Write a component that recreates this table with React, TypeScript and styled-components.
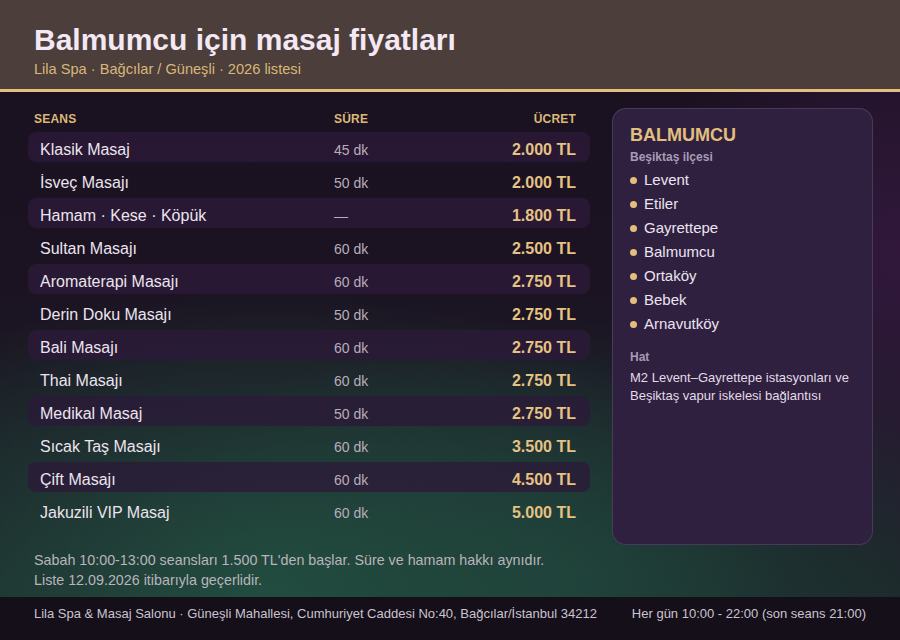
import * as React from 'react';
import styled, { createGlobalStyle } from 'styled-components';

const GlobalStyle = createGlobalStyle`
  html, body {
    margin: 0;
    padding: 0;
    height: 100%;
  }
  body {
    font-family: "Liberation Sans", Arial, sans-serif;
    background: #1a1020;
  }
  #root {
    height: 100%;
  }
`

interface Session {
  name: string
  duration: string
  price: string
}

const sessions: Session[] = [
  { name: 'Klasik Masaj', duration: '45 dk', price: '2.000 TL' },
  { name: 'İsveç Masajı', duration: '50 dk', price: '2.000 TL' },
  { name: 'Hamam · Kese · Köpük', duration: '—', price: '1.800 TL' },
  { name: 'Sultan Masajı', duration: '60 dk', price: '2.500 TL' },
  { name: 'Aromaterapi Masajı', duration: '60 dk', price: '2.750 TL' },
  { name: 'Derin Doku Masajı', duration: '50 dk', price: '2.750 TL' },
  { name: 'Bali Masajı', duration: '60 dk', price: '2.750 TL' },
  { name: 'Thai Masajı', duration: '60 dk', price: '2.750 TL' },
  { name: 'Medikal Masaj', duration: '50 dk', price: '2.750 TL' },
  { name: 'Sıcak Taş Masajı', duration: '60 dk', price: '3.500 TL' },
  { name: 'Çift Masajı', duration: '60 dk', price: '4.500 TL' },
  { name: 'Jakuzili VIP Masaj', duration: '60 dk', price: '5.000 TL' },
]

const neighbourhoods = ['Levent', 'Etiler', 'Gayrettepe', 'Balmumcu', 'Ortaköy', 'Bebek', 'Arnavutköy']

const Page = styled.div`
  height: 640px;
  display: flex;
  flex-direction: column;
  background:
    radial-gradient(ellipse 520px 300px at 30% 92%, rgba(34, 78, 64, 0.95), rgba(34, 78, 64, 0) 100%),
    radial-gradient(ellipse 420px 260px at 62% 90%, rgba(30, 70, 60, 0.7), rgba(30, 70, 60, 0) 100%),
    radial-gradient(ellipse 260px 320px at 100% 40%, rgba(58, 26, 70, 0.7), rgba(58, 26, 70, 0) 100%),
    linear-gradient(180deg, #1a1020 0%, #1b1322 45%, #1d2a2b 100%);
`

const Header = styled.header`
  background: #4b3e3b;
  border-bottom: 3px solid #e2bf7e;
  padding: 22px 34px 10px;
`

const Title = styled.h1`
  margin: 0;
  font-size: 30px;
  line-height: 36px;
  font-weight: 700;
  color: #f3e8f3;
`

const Subtitle = styled.div`
  margin-top: 1px;
  font-size: 14.6px;
  line-height: 20px;
  color: #d9b779;
`

const Main = styled.main`
  flex: 1;
  min-height: 0;
  padding: 16px 27px 0 28px;
  display: grid;
  grid-template-columns: 562px 1fr;
  column-gap: 22px;
`

const Table = styled.div`
  display: flex;
  flex-direction: column;
  gap: 3px;
`

const HeadRow = styled.div`
  display: grid;
  grid-template-columns: 300px 1fr auto;
  align-items: center;
  box-sizing: border-box;
  height: 20px;
  padding: 1px 14px 0 6px;
  margin-bottom: 1px;
  font-size: 12px;
  font-weight: 700;
  letter-spacing: 0.2px;
  color: #dcb978;
`

const HeadRight = styled.span`
  text-align: right;
`

const Row = styled.div<{ $shaded: boolean }>`
  display: grid;
  grid-template-columns: 294px 1fr auto;
  align-items: center;
  box-sizing: border-box;
  height: 30px;
  padding: 5px 14px 0 12px;
  border-radius: 8px;
  background: ${p => (p.$shaded ? 'rgba(44, 26, 56, 0.78)' : 'transparent')};
`

const Name = styled.span`
  font-size: 16px;
  color: #ece4ef;
`

const Duration = styled.span`
  font-size: 14px;
  color: #b8adbb;
`

const Price = styled.span`
  font-size: 16px;
  font-weight: 700;
  color: #e6c283;
  text-align: right;
`

const Card = styled.aside`
  background: #2f2040;
  border: 1px solid rgba(255, 255, 255, 0.12);
  border-radius: 14px;
  padding: 15px 17px;
`

const CardTitle = styled.h2`
  margin: 0;
  font-size: 18px;
  line-height: 22px;
  font-weight: 700;
  color: #e2bf7e;
`

const CardLabel = styled.div<{ $gap: number }>`
  margin-top: ${p => p.$gap}px;
  font-size: 12px;
  line-height: 16px;
  font-weight: 700;
  color: #a99bb6;
`

const Places = styled.ul`
  list-style: none;
  margin: 2px 0 0;
  padding: 0;
`

const Place = styled.li`
  display: flex;
  align-items: center;
  gap: 7px;
  height: 24px;
  font-size: 15px;
  color: #ece4ef;

  &::before {
    content: '';
    width: 7px;
    height: 7px;
    border-radius: 50%;
    background: #e2bf7e;
    margin-top: 2px;
  }
`

const CardText = styled.p`
  margin: 4px 0 0;
  font-size: 13px;
  line-height: 18px;
  color: #e3dbe6;
`

const Notes = styled.div`
  padding: 5px 34px 7px;
  font-size: 14.3px;
  line-height: 20px;
  color: #b9b4bd;
`

const Footer = styled.footer`
  height: 43px;
  box-sizing: border-box;
  padding: 8px 34px 0;
  background: #150f1a;
  display: flex;
  justify-content: space-between;
  font-size: 13px;
  line-height: 18px;
  color: #cbc3cf;
`

export default function App() {
  return (
    <Page>
      <GlobalStyle />
      <Header>
        <Title>Balmumcu için masaj fiyatları</Title>
        <Subtitle>Lila Spa · Bağcılar / Güneşli · 2026 listesi</Subtitle>
      </Header>
      <Main>
        <Table>
          <HeadRow>
            <span>SEANS</span>
            <span>SÜRE</span>
            <HeadRight>ÜCRET</HeadRight>
          </HeadRow>
          {sessions.map((s, i) => (
            <Row key={s.name} $shaded={i % 2 === 0}>
              <Name>{s.name}</Name>
              <Duration>{s.duration}</Duration>
              <Price>{s.price}</Price>
            </Row>
          ))}
        </Table>
        <Card>
          <CardTitle>BALMUMCU</CardTitle>
          <CardLabel $gap={3}>Beşiktaş ilçesi</CardLabel>
          <Places>
            {neighbourhoods.map(n => <Place key={n}>{n}</Place>)}
          </Places>
          <CardLabel $gap={14}>Hat</CardLabel>
          <CardText>
            M2 Levent–Gayrettepe istasyonları ve Beşiktaş vapur iskelesi bağlantısı
          </CardText>
        </Card>
      </Main>
      <Notes>
        <div>Sabah 10:00-13:00 seansları 1.500 TL'den başlar. Süre ve hamam hakkı aynıdır.</div>
        <div>Liste 12.09.2026 itibarıyla geçerlidir.</div>
      </Notes>
      <Footer>
        <span>Lila Spa &amp; Masaj Salonu · Güneşli Mahallesi, Cumhuriyet Caddesi No:40, Bağcılar/İstanbul 34212</span>
        <span>Her gün 10:00 - 22:00 (son seans 21:00)</span>
      </Footer>
    </Page>
  );
}
